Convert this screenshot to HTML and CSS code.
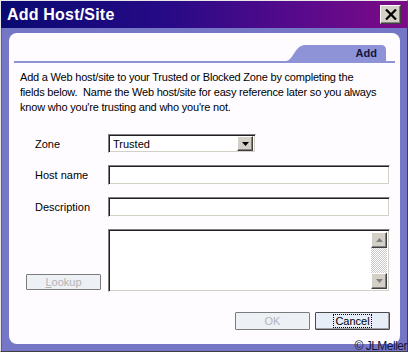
FILE: index.html
```html
<!DOCTYPE html>
<html lang="en">
<head>
  <meta charset="UTF-8" />
  <title>Add Host/Site</title>
  <link rel="stylesheet" href="styles.css">
</head>
<body>
  <div class="window">
    <div class="titlebar">
      <span class="title">Add Host/Site</span>
      <button class="close" aria-label="Close">
        <svg width="12" height="11" viewBox="0 0 12 11">
          <path d="M1 0.5 L11 10.5 M11 0.5 L1 10.5" stroke="#000" stroke-width="2.2" fill="none" />
        </svg>
      </button>
    </div>

    <div class="frame">
      <div class="panel">
        <div class="tabs">
          <div class="tab">Add</div>
        </div>

        <p class="intro">
          Add a Web host/site to your Trusted or Blocked Zone by completing the<br>
          fields below.&nbsp; Name the Web host/site for easy reference later so you always<br>
          know who you're trusting and who you're not.
        </p>

        <div class="form">
          <label>Zone</label>
          <div class="select">
            <span class="select-value">Trusted</span>
            <span class="drop">
              <svg width="7" height="4" viewBox="0 0 7 4"><path d="M0 0 H7 L3.5 4 Z" fill="#000" /></svg>
            </span>
          </div>

          <label>Host name</label>
          <div class="field"></div>

          <label>Description</label>
          <div class="field"></div>

          <button class="btn lookup" disabled><u>L</u>ookup</button>
          <div class="memo">
            <div class="memo-text"></div>
            <div class="scrollbar">
              <span class="arrow">
                <svg width="7" height="4" viewBox="0 0 7 4"><path d="M0 4 H7 L3.5 0 Z" fill="#808080" /></svg>
              </span>
              <span class="track"></span>
              <span class="arrow">
                <svg width="7" height="4" viewBox="0 0 7 4"><path d="M0 0 H7 L3.5 4 Z" fill="#808080" /></svg>
              </span>
            </div>
          </div>
        </div>

        <div class="actions">
          <button class="btn" disabled>OK</button>
          <button class="btn cancel"><span class="focus">Cancel</span></button>
        </div>
      </div>
    </div>

    <span class="copyright">&copy; JLMeller</span>
  </div>
</body>
</html>
```

FILE: styles.css
```css
html, body {
  margin: 0;
  padding: 0;
  background-color: #d4d0c8;
  font-family: "Liberation Sans", Arial, sans-serif;
  font-size: 11px;
  color: #000;
}

.window {
  position: relative;
  width: 408px;
  height: 352px;
  box-sizing: border-box;
  display: flex;
  flex-direction: column;
  border: 1px solid;
  border-color: #e8e8e8 #404040 #404040 #e8e8e8;
}

/* title bar */
.titlebar {
  height: 27px;
  display: flex;
  align-items: center;
  justify-content: space-between;
  padding: 0 6px 0 6px;
  background: linear-gradient(to right, #0a0a72 0%, #260a86 40%, #5a0a8c 75%, #7e0a86 100%);
}

.title {
  color: #fff;
  font-size: 16px;
  font-weight: bold;
  letter-spacing: 0.2px;
}

.close {
  width: 21px;
  height: 19px;
  padding: 0;
  display: flex;
  align-items: center;
  justify-content: center;
  background-color: #d4d0c8;
  border: 1px solid;
  border-color: #fff #404040 #404040 #fff;
  box-shadow: inset -1px -1px #808080;
}

/* periwinkle frame + white panel */
.frame {
  flex: 1;
  display: flex;
  padding: 5px 7px 7px 7px;
  background-color: #7676c6;
  border-left: 1px solid #5a5aa0;
}

.panel {
  flex: 1;
  display: flex;
  flex-direction: column;
  background-color: #fffcff;
  border-radius: 8px;
}

.tabs {
  display: flex;
  justify-content: flex-end;
  margin: 0 5px;
  padding: 12px 9px 0 0;
  border-bottom: 2px solid #8d93d6;
}

.tab {
  width: 100px;
  height: 16px;
  box-sizing: border-box;
  padding-right: 9px;
  text-align: right;
  line-height: 16px;
  font-weight: bold;
  color: #14143c;
  background-color: #8d93d6;
  clip-path: path("M0 16 C7 16 9 0 19 0 L95 0 Q100 0 100 5 L100 16 Z");
}

.intro {
  margin: 7px 0 0 11px;
  line-height: 15px;
  letter-spacing: -0.2px;
  white-space: nowrap;
}

/* form */
.form {
  display: grid;
  grid-template-columns: 82px 1fr;
  grid-template-rows: 19px 20px 20px 63px;
  row-gap: 12px;
  margin: 19px 10px 0 17px;
}

.form label {
  align-self: center;
  padding-left: 9px;
}

.field,
.select,
.memo {
  box-sizing: border-box;
  background-color: #fff;
  border: 1px solid;
  border-color: #808080 #fff #fff #808080;
  box-shadow: inset 1px 1px #202020, inset -1px -1px #d4d0c8;
}

.select {
  width: 148px;
  display: flex;
  align-items: center;
  justify-content: space-between;
  padding: 2px 2px 2px 4px;
}

.drop {
  width: 16px;
  height: 15px;
  box-sizing: border-box;
  display: flex;
  align-items: center;
  justify-content: center;
  background-color: #d4d0c8;
  border: 1px solid;
  border-color: #fff #404040 #404040 #fff;
  box-shadow: inset -1px -1px #808080;
}

.memo {
  display: flex;
  padding: 2px;
}

.memo-text {
  flex: 1;
}

.scrollbar {
  width: 16px;
  display: flex;
  flex-direction: column;
}

.arrow {
  height: 16px;
  box-sizing: border-box;
  display: flex;
  align-items: center;
  justify-content: center;
  background-color: #d4d0c8;
  border: 1px solid;
  border-color: #fff #404040 #404040 #fff;
  box-shadow: inset -1px -1px #808080;
}

.track {
  flex: 1;
  background-color: #e4e4e4;
  background-image: repeating-conic-gradient(#ffffff 0 25%, #c8c8c8 0 50%);
  background-size: 2px 2px;
}

/* buttons */
.btn {
  width: 75px;
  height: 18px;
  padding: 0;
  font-family: inherit;
  font-size: 11px;
  color: #b4b4b4;
  background-color: #edf0f4;
  border: 1px solid #7c7c7c;
  border-radius: 1px;
}

.lookup {
  width: 75px;
  height: 16px;
  align-self: end;
  margin: 0 0 2px 0;
}

.actions {
  display: flex;
  justify-content: flex-end;
  gap: 5px;
  margin: 20px 10px 0 0;
}

.cancel {
  color: #000;
  background-color: #e8eef8;
  border-color: #4a4a4a;
  box-shadow: inset -1px -1px #a0a0a0;
}

.cancel .focus {
  padding: 0 1px;
  border: 1px dotted #000;
}

.copyright {
  position: absolute;
  right: 0;
  bottom: -1px;
  font-size: 12px;
  line-height: 12px;
  letter-spacing: -0.5px;
  color: #14143c;
}
```
